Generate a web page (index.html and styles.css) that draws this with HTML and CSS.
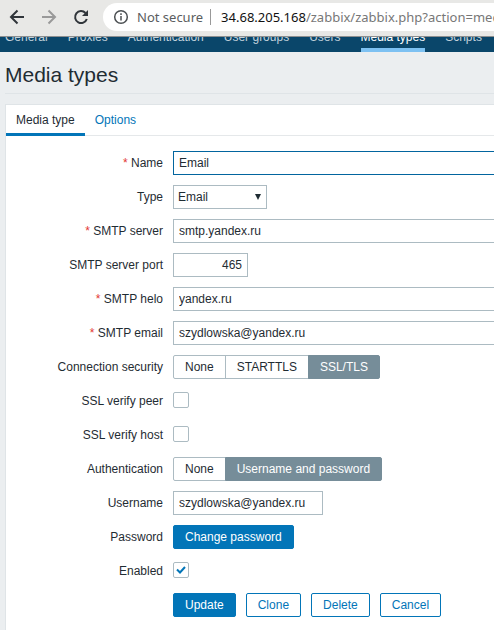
FILE: index.html
```html
<!DOCTYPE html>
<html lang="en">
<head>
<meta charset="utf-8">
<title>Media types</title>
<link rel="stylesheet" href="styles.css">
</head>
<body>
<div class="toolbar">
  <button class="tool" type="button" aria-label="Back"><svg width="16" height="16" viewBox="0 0 16 16"><path d="M15 8H2M8.500 1.500 2 8l6.500 6.500"/></svg></button>
  <button class="tool tool-off" type="button" aria-label="Forward"><svg width="16" height="16" viewBox="0 0 16 16"><path d="M1 8h13M7.500 1.500 14 8l-6.500 6.500"/></svg></button>
  <button class="tool" type="button" aria-label="Reload"><svg width="16" height="16" viewBox="0 0 16 16"><path d="M13.800 10A6 6 0 1 1 12.500 4"/><path class="solid" d="M15 1v6H9z"/></svg></button>
  <div class="address">
    <svg class="info" width="16" height="16" viewBox="0 0 16 16"><circle cx="8" cy="8" r="6.300"/><path d="M8 7v4.500M8 4.200v1.800"/></svg>
    <span class="secure">Not secure</span>
    <span class="url"><b>34.68.205.168</b>/zabbix/zabbix.php?action=mediatype.edit</span>
  </div>
</div>
<nav class="nav">
  <a href="#">General</a>
  <a href="#">Proxies</a>
  <a href="#">Authentication</a>
  <a href="#">User groups</a>
  <a href="#">Users</a>
  <a href="#" class="current">Media types</a>
  <a href="#">Scripts</a>
</nav>
<main>
  <h1>Media types</h1>
  <form class="panel">
    <div class="tabs">
      <a href="#" class="tab selected">Media type</a>
      <a href="#" class="tab">Options</a>
    </div>
    <div class="rows">
      <label class="required" for="name">Name</label>
      <div class="field"><input class="text wide focused" id="name" type="text" value="Email"></div>

      <label for="type">Type</label>
      <div class="field"><span class="select"><select id="type"><option>Email</option></select><svg width="6" height="6" viewBox="0 0 6 6"><path d="M0 0h6L3 6z"/></svg></span></div>

      <label class="required" for="server">SMTP server</label>
      <div class="field"><input class="text wide" id="server" type="text" value="smtp.yandex.ru"></div>

      <label for="port">SMTP server port</label>
      <div class="field"><input class="text port" id="port" type="text" value="465"></div>

      <label class="required" for="helo">SMTP helo</label>
      <div class="field"><input class="text wide" id="helo" type="text" value="yandex.ru"></div>

      <label class="required" for="email">SMTP email</label>
      <div class="field"><input class="text wide" id="email" type="text" value="szydlowska@yandex.ru"></div>

      <span class="label" id="security">Connection security</span>
      <div class="field segments" role="radiogroup" aria-labelledby="security">
        <input type="radio" name="security" id="sec-none"><label for="sec-none">None</label>
        <input type="radio" name="security" id="sec-start"><label for="sec-start">STARTTLS</label>
        <input type="radio" name="security" id="sec-ssl" checked><label for="sec-ssl">SSL/TLS</label>
      </div>

      <label for="peer">SSL verify peer</label>
      <div class="field"><span class="check"><input type="checkbox" id="peer"><svg width="10" height="8" viewBox="0 0 10 8"><path d="M1 4l3 2.500L9 1"/></svg></span></div>

      <label for="host">SSL verify host</label>
      <div class="field"><span class="check"><input type="checkbox" id="host"><svg width="10" height="8" viewBox="0 0 10 8"><path d="M1 4l3 2.500L9 1"/></svg></span></div>

      <span class="label" id="auth">Authentication</span>
      <div class="field segments" role="radiogroup" aria-labelledby="auth">
        <input type="radio" name="auth" id="auth-none"><label for="auth-none">None</label>
        <input type="radio" name="auth" id="auth-user" checked><label for="auth-user">Username and password</label>
      </div>

      <label for="username">Username</label>
      <div class="field"><input class="text medium" id="username" type="text" value="szydlowska@yandex.ru"></div>

      <label for="password">Password</label>
      <div class="field"><button class="button primary" id="password" type="button">Change password</button></div>

      <label for="enabled">Enabled</label>
      <div class="field"><span class="check"><input type="checkbox" id="enabled" checked><svg width="10" height="8" viewBox="0 0 10 8"><path d="M1 3.500l3 3L9 1"/></svg></span></div>

      <div class="field actions">
        <button class="button primary" type="button">Update</button>
        <button class="button" type="button">Clone</button>
        <button class="button" type="button">Delete</button>
        <button class="button" type="button">Cancel</button>
      </div>
    </div>
  </form>
</main>
</body>
</html>
```
FILE: styles.css
```css
* {
  box-sizing: border-box;
}

body {
  margin: 0;
  min-height: 100vh;
  overflow: hidden;
  background: #ebeef0;
  color: #1f2c33;
  font: 12px/14px "Liberation Sans", Arial, sans-serif;
}

a {
  color: #0275b8;
  text-decoration: none;
}

input,
select,
button {
  margin: 0;
  font: inherit;
  color: inherit;
}

/* Browser toolbar */
.toolbar {
  display: flex;
  align-items: center;
  gap: 16px;
  height: 37px;
  padding: 0 0 2px 9px;
  border-bottom: 1px solid #8d8f90;
  background: #e8e8e6;
}

.tool {
  flex: none;
  display: flex;
  padding: 0;
  border: 0;
  background: none;
}

.tool svg,
.info {
  fill: none;
  stroke: #30353a;
  stroke-width: 2;
}

.tool-off svg {
  stroke: #999;
}

.tool .solid {
  fill: #30353a;
  stroke: none;
}

.address {
  flex: 1;
  min-width: 0;
  display: flex;
  align-items: center;
  height: 28px;
  margin-left: -2px;
  padding-left: 10px;
  border-radius: 14px 0 0 14px;
  background: #fff;
  overflow: hidden;
  white-space: nowrap;
  font: 13px/16px "Noto Sans", sans-serif;
  color: #5a5d60;
}

.info {
  flex: none;
  stroke: #4b4f52;
  stroke-width: 1.5;
}

.secure {
  margin-left: 8px;
  padding-right: 7px;
  border-right: 1px solid #999;
}

.url {
  margin-left: 10px;
  color: #777;
}

.url b {
  font-weight: 400;
  color: #111;
}

/* Section navigation, scrolled partly under the toolbar */
.nav {
  display: flex;
  align-items: flex-end;
  gap: 20px;
  height: 15px;
  padding-left: 5px;
  background: #0a466a;
  overflow: hidden;
  white-space: nowrap;
}

.nav a {
  padding-bottom: 8px;
  color: #c3d2dc;
}

.nav .current {
  padding-bottom: 4px;
  border-bottom: 4px solid #7dc1f2;
  color: #fff;
}

main {
  padding-left: 5px;
}

h1 {
  margin: 0 0 10px;
  padding: 11px 0 6px;
  border-bottom: 1px solid #dfe4e7;
  font-size: 21px;
  line-height: 24px;
  font-weight: 400;
}

.panel {
  min-height: calc(100vh - 104px);
  border-top: 1px solid #dfe4e7;
  border-left: 1px solid #dfe4e7;
  background: #fff;
}

.tabs {
  display: flex;
  height: 31px;
  border-bottom: 1px solid #e5e8ea;
}

.tab {
  height: 31px;
  padding: 8px 10px 0;
}

.tab.selected {
  border-bottom: 3px solid #0275b8;
  color: #1f2c33;
}

.rows {
  display: grid;
  grid-template-columns: 157px 1fr;
  grid-auto-rows: 24px;
  gap: 10px;
  padding: 15px 0 12px;
  overflow: hidden;
  line-height: 24px;
}

.rows > label,
.label {
  text-align: right;
}

.required::before {
  content: "* ";
  color: #e33734;
}

.field {
  display: flex;
  align-items: center;
  min-width: 0;
}

.text {
  flex: none;
  height: 24px;
  padding: 0 5px;
  border: 1px solid #acbbc2;
  background: #fff;
}

.wide {
  width: 453px;
}

.medium {
  width: 150px;
}

.port {
  width: 75px;
  text-align: right;
}

.focused {
  border-color: #02659f;
}

.select {
  position: relative;
  width: 94px;
}

.select select {
  display: block;
  width: 100%;
  height: 24px;
  padding: 0 4px;
  border: 1px solid #acbbc2;
  border-radius: 0;
  background: #fff;
  line-height: 22px;
  appearance: none;
}

.select svg {
  position: absolute;
  right: 6px;
  top: 9px;
  fill: #1f2c33;
  pointer-events: none;
}

.segments input {
  position: absolute;
  opacity: 0;
}

.segments label {
  height: 24px;
  margin-right: -1px;
  padding: 0 11px;
  border: 1px solid #acbbc2;
  line-height: 22px;
}

.segments label:first-of-type {
  border-radius: 2px 0 0 2px;
}

.segments label:last-of-type {
  border-radius: 0 2px 2px 0;
}

.segments input:checked + label {
  border-color: #768d99;
  background: #768d99;
  color: #fff;
}

.check {
  position: relative;
  display: flex;
  margin-bottom: 2px;
}

.check input {
  width: 16px;
  height: 16px;
  border: 1px solid #acbbc2;
  border-radius: 2px;
  background: #fff;
  appearance: none;
}

.check svg {
  display: none;
  position: absolute;
  left: 3px;
  top: 4px;
  fill: none;
  stroke: #0275b8;
  stroke-width: 2;
  pointer-events: none;
}

.check input:checked + svg {
  display: block;
}

.button {
  height: 24px;
  padding: 0 11px;
  border: 1px solid #0275b8;
  border-radius: 2px;
  background: #fff;
  color: #0275b8;
  line-height: 22px;
}

.primary {
  background: #0275b8;
  color: #fff;
}

.actions {
  grid-column: 2;
  gap: 10px;
}
```
